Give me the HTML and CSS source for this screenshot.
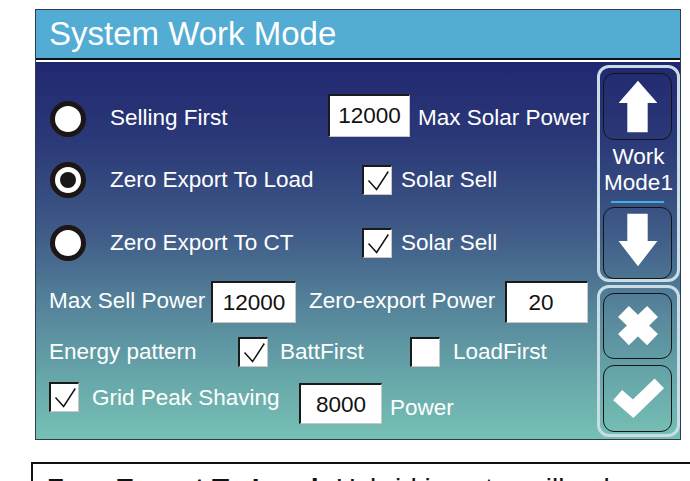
FILE: index.html
```html
<!DOCTYPE html>
<html lang="en">
<head>
    <meta charset="UTF-8">
    <meta name="viewport" content="width=device-width, initial-scale=1.0">
    <title>System Work Mode</title>
    <link rel="stylesheet" href="styles.css">
</head>
<body>
    <div class="panel">
        <div class="panel-head">System Work Mode</div>
        <div class="panel-body">
            <div class="settings">
                <div class="row row-1">
                    <span class="radio radio-low"></span>
                    <span class="mode-label">Selling First</span>
                    <span class="field field-solar">12000</span>
                    <span class="text gap-8">Max Solar Power</span>
                </div>
                <div class="row row-2">
                    <span class="radio checked"></span>
                    <span class="mode-label wide">Zero Export To Load</span>
                    <span class="check on">
                        <svg viewBox="0 0 30 30"><polyline points="5,15 14,25 27,5"/></svg>
                    </span>
                    <span class="text gap-9">Solar Sell</span>
                </div>
                <div class="row row-3">
                    <span class="radio"></span>
                    <span class="mode-label wide">Zero Export To CT</span>
                    <span class="check on">
                        <svg viewBox="0 0 30 30"><polyline points="5,15 14,25 27,5"/></svg>
                    </span>
                    <span class="text gap-9">Solar Sell</span>
                </div>
                <div class="row row-4">
                    <span class="text w-162">Max Sell Power</span>
                    <span class="field field-sell">12000</span>
                    <span class="text w-196 gap-13">Zero-export Power</span>
                    <span class="field field-zero">20</span>
                </div>
                <div class="row row-5">
                    <span class="text w-189">Energy pattern</span>
                    <span class="check on">
                        <svg viewBox="0 0 30 30"><polyline points="5,15 14,25 27,5"/></svg>
                    </span>
                    <span class="text w-130 gap-12">BattFirst</span>
                    <span class="check"></span>
                    <span class="text gap-13">LoadFirst</span>
                </div>
                <div class="row row-6">
                    <span class="check on">
                        <svg viewBox="0 0 30 30"><polyline points="5,15 14,25 27,5"/></svg>
                    </span>
                    <span class="text w-207 gap-13">Grid Peak Shaving</span>
                    <span class="field field-peak">8000</span>
                    <span class="text gap-8 power">Power</span>
                </div>
            </div>

            <div class="side">
                <div class="side-group">
                    <div class="side-btn btn-up">
                        <svg viewBox="0 0 69 67"><polygon points="35,7 55,30 45,30 45,60 24,60 24,30 15,30"/></svg>
                    </div>
                    <div class="mode-name">Work<br>Mode1</div>
                    <div class="mode-line"></div>
                    <div class="side-btn btn-down">
                        <svg viewBox="0 0 69 72"><polygon points="24,6 45,6 45,34 55,34 35,60 15,34 24,34"/></svg>
                    </div>
                </div>
                <div class="side-group">
                    <div class="side-btn btn-cancel">
                        <svg viewBox="0 0 69 66">
                            <line x1="20" y1="18" x2="50" y2="47"/>
                            <line x1="50" y1="18" x2="20" y2="47"/>
                        </svg>
                    </div>
                    <div class="side-btn btn-ok">
                        <svg viewBox="0 0 69 67"><polyline points="14,30 30,44 57,18"/></svg>
                    </div>
                </div>
            </div>
        </div>
    </div>

    <div class="note">
        <b>Zero Export To Load:</b> Hybrid inverter will only
    </div>
</body>
</html>
```

FILE: styles.css
```css
body {
    margin: 0;
    font-family: "Liberation Sans", Arial, sans-serif;
    background-color: #fff;
    overflow: hidden;
}
.panel {
    margin: 9px 0 0 35px;
    width: 646px;
    border: 1px solid #2c3a52;
    background-color: #fff;
    box-sizing: border-box;
}
.panel-head {
    height: 48px;
    line-height: 48px;
    padding-left: 13px;
    background-color: #52acd4;
    border-bottom: 2px solid #111;
    color: #fff;
    font-size: 33px;
}
.panel-body {
    display: flex;
    height: 377px;
    margin-top: 2px;
    background: linear-gradient(to bottom, #222870 0%, #2b3a78 22%, #405c88 46%, #56869b 66%, #69aaab 86%, #76c0b5 100%);
}
.settings {
    flex: 1;
    padding: 31px 0 0 13px;
    color: #fff;
    font-size: 22.5px;
}
.row {
    display: flex;
    align-items: center;
}
.row-1 { height: 44px; }
.row-2 { height: 44px; margin-top: 21px; }
.row-3 { height: 44px; margin-top: 19px; }
.row-4 { height: 42px; margin-top: 16px; }
.row-5 { height: 30px; margin-top: 14px; }
.row-6 { height: 42px; margin-top: 15px; align-items: flex-start; }

.text {
    line-height: 30px;
    white-space: nowrap;
}
.row-1 .text,
.row-1 .mode-label { margin-top: 6px; }
.row-4 .text { margin-top: -2px; }
.gap-8 { margin-left: 8px; }
.gap-9 { margin-left: 9px; }
.gap-12 { margin-left: 12px; }
.gap-13 { margin-left: 13px; }
.w-130 { width: 130px; }
.w-162 { width: 162px; }
.w-189 { width: 189px; }
.w-196 { width: 196px; }
.w-207 { width: 207px; }
.row-6 .text { margin-top: 1px; }
.row-6 .power { margin-top: 11px; }

.radio {
    width: 36px;
    height: 36px;
    margin: 0 24px 0 1px;
    border: 5px solid #1c1616;
    border-radius: 50%;
    background-color: #fff;
    box-sizing: border-box;
    display: flex;
    align-items: center;
    justify-content: center;
}
.radio-low { margin-top: 7px; }
.radio.checked::after {
    content: "";
    width: 16px;
    height: 16px;
    border-radius: 50%;
    background-color: #1c1616;
}
.mode-label {
    width: 218px;
    line-height: 30px;
    white-space: nowrap;
}
.mode-label.wide { width: 252px; }

.field {
    height: 43px;
    background-color: #fff;
    border-top: 2px solid #1a1a1a;
    border-left: 2px solid #1a1a1a;
    border-right: 1px solid #c8c8c8;
    border-bottom: 1px solid #c8c8c8;
    box-sizing: border-box;
    color: #111;
    text-align: center;
    line-height: 40px;
}
.field-solar { width: 82px; }
.field-sell { width: 85px; height: 42px; }
.field-zero { width: 83px; height: 42px; padding-right: 12px; }
.field-peak { width: 83px; height: 41px; margin-top: 1px; }

.check {
    width: 30px;
    height: 30px;
    flex-shrink: 0;
    background-color: #fff;
    border-top: 2px solid #1a1a1a;
    border-left: 2px solid #1a1a1a;
    border-right: 1px solid #c8c8c8;
    border-bottom: 1px solid #c8c8c8;
    box-sizing: border-box;
}
.check svg {
    display: block;
    width: 27px;
    height: 27px;
}
.check polyline {
    fill: none;
    stroke: #111;
    stroke-width: 1.6;
}

.side {
    width: 83px;
    padding-top: 3px;
    display: flex;
    flex-direction: column;
    gap: 3px;
}
.side-group {
    border: 3px solid #c9dde6;
    border-radius: 12px;
    padding: 5px 0 0 3px;
}
.side-group + .side-group {
    padding-bottom: 2px;
}
.side-btn {
    width: 69px;
    border: 1.5px solid #141414;
    border-radius: 11px;
    box-sizing: border-box;
}
.side-btn svg {
    display: block;
    width: 100%;
    height: 100%;
    fill: #fff;
}
.btn-up { height: 67px; }
.btn-down { height: 72px; margin-top: 4px; }
.btn-cancel { height: 66px; }
.btn-ok { height: 67px; margin-top: 6px; }
.btn-cancel line {
    stroke: #fff;
    stroke-width: 16;
}
.btn-ok polyline {
    fill: none;
    stroke: #fff;
    stroke-width: 14;
}
.mode-name {
    margin-top: 4px;
    margin-left: -3px;
    color: #fff;
    font-size: 22.5px;
    line-height: 26px;
    text-align: center;
}
.mode-line {
    width: 53px;
    height: 2px;
    margin: 5px 0 0 8px;
    background-color: #3fb2e4;
}

.note {
    margin: 22px 0 0 31px;
    width: 659px;
    height: 40px;
    padding: 9px 0 0 14px;
    border: 2px solid #111;
    border-right: none;
    box-sizing: border-box;
    overflow: hidden;
    font-size: 28px;
    line-height: 32px;
    white-space: nowrap;
    color: #111;
}
```
